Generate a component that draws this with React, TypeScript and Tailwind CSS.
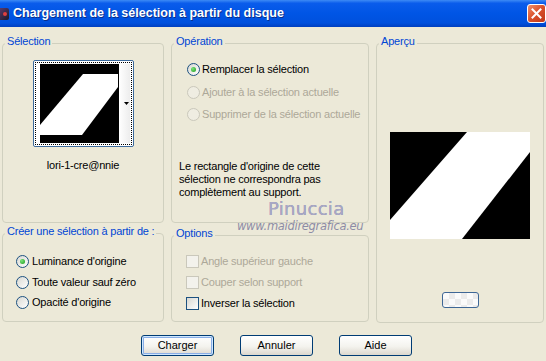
import React from "react";

const FONT = "font-['Liberation_Sans',Arial,sans-serif]";

function Group({
  label,
  className,
  children,
}: {
  label: string;
  className: string;
  children?: React.ReactNode;
}) {
  return (
    <div className={`relative border border-[#D0D0BF] rounded-[4px] ${className}`}>
      <span className="absolute -top-[9px] left-[2px] bg-[#ECE9D8] px-[2px] text-[11px] leading-[13px] text-[#0046D5] tracking-[-0.2px] whitespace-nowrap">
        {label}
      </span>
      {children}
    </div>
  );
}

function Radio({
  checked,
  disabled,
  label,
  gap,
  h,
}: {
  checked?: boolean;
  disabled?: boolean;
  label: string;
  gap: string;
  h: string;
}) {
  return (
    <div className={`flex items-center ${h}`}>
      <span
        className={`w-[13px] h-[13px] shrink-0 rounded-full border flex items-center justify-center ${
          disabled
            ? "border-[#CAC8BB] bg-[#EFEDE2]"
            : "border-[#1C5180] bg-[linear-gradient(135deg,#D8D8D2,#FFFFFF)]"
        }`}
      >
        {checked && (
          <span className="w-[5px] h-[5px] rounded-full bg-[radial-gradient(circle_at_35%_35%,#7BE47B,#1A9A1A)]" />
        )}
      </span>
      <span
        className={`${gap} text-[11px] leading-[13px] tracking-[-0.2px] whitespace-nowrap ${
          disabled ? "text-[#ACA899]" : "text-black"
        }`}
      >
        {label}
      </span>
    </div>
  );
}

function Check({ disabled, label }: { disabled?: boolean; label: string }) {
  return (
    <div className="flex items-center h-[21px]">
      <span
        className={`w-[13px] h-[13px] shrink-0 border ${
          disabled
            ? "border-[#CAC8BB] bg-[#F3F2EC]"
            : "border-[#1C5180] bg-[linear-gradient(135deg,#D8D8D2,#FFFFFF)]"
        }`}
      />
      <span
        className={`ml-[2px] text-[11px] leading-[13px] tracking-[-0.2px] whitespace-nowrap ${
          disabled ? "text-[#ACA899]" : "text-black"
        }`}
      >
        {label}
      </span>
    </div>
  );
}

function Btn({ children, def }: { children: React.ReactNode; def?: boolean }) {
  return (
    <div
      className={`w-[73px] h-[21px] rounded-[3px] border border-[#003C74] bg-[linear-gradient(to_bottom,#FFFFFF,#F4F3EE_55%,#DCD8CE)] flex items-center justify-center text-[11px] leading-[13px] text-black ${
        def ? "shadow-[inset_0_0_0_1px_#CEE7FF,inset_0_0_0_2px_#8AAEE6]" : ""
      }`}
    >
      {children}
    </div>
  );
}

export default function App() {
  return (
    <div className={`${FONT} w-[546px] h-[361px] bg-[#ECE9D8] flex flex-col overflow-hidden relative`}>
      {/* Title bar */}
      <div className="h-[27px] shrink-0 flex items-center bg-[linear-gradient(to_bottom,#3D8BF5_0%,#0A5CEB_12%,#0055E5_50%,#0050DD_85%,#003FBF_100%)]">
        <div className="w-[9px] h-[12px] mt-[1px] rounded-r-[2px] bg-[linear-gradient(135deg,#5A3A6A,#1A1A2A)] flex items-center justify-center">
          <span className="w-[4px] h-[4px] rounded-full bg-[#E04040]" />
        </div>
        <span className="ml-[4px] text-white font-bold text-[12.5px] leading-[15px] [text-shadow:1px_1px_0_#0A2E8A] whitespace-nowrap">
          Chargement de la sélection à partir du disque
        </span>
        <div className="ml-auto mr-0 w-[19px] h-[19px] rounded-[3px] border border-white bg-[linear-gradient(135deg,#F0906A,#D9502A_50%,#C0381A)] flex items-center justify-center">
          <svg width="11" height="11" viewBox="0 0 11 11">
            <path d="M1.5 1.5 L9.5 9.5 M9.5 1.5 L1.5 9.5" stroke="white" strokeWidth="2" strokeLinecap="square" />
          </svg>
        </div>
      </div>

      {/* Body */}
      <div className="flex pl-[2px] pt-[16px] gap-[7px]">
        {/* Column 1 */}
        <div className="flex flex-col gap-[10px] w-[162px]">
          <Group label="Sélection" className="h-[180px] flex flex-col items-center pt-[16px]">
            <div className="w-[101px] h-[87px] border border-[#3C6A9C] rounded-[2px] bg-white p-[1px]">
              <div className="w-full h-full border border-dotted border-black flex pl-[4px] pt-[1px] bg-white">
                <svg width="79" height="79" viewBox="0 0 79 79" className="shrink-0">
                  <rect width="79" height="79" fill="black" />
                  <polygon points="43,10 78,10 78,23 42,71 0,71 0,61" fill="white" />
                </svg>
                <div className="w-[11px] h-[79px] bg-[linear-gradient(to_right,#FFFFFF,#EDEDED)] flex items-center justify-end pr-[1px]">
                  <svg width="5" height="3" viewBox="0 0 5 3">
                    <polygon points="0,0 5,0 2.5,3" fill="black" />
                  </svg>
                </div>
              </div>
            </div>
            <div className="mt-[12px] text-[11px] leading-[13px] tracking-[-0.2px] text-black">lori-1-cre@nnie</div>
          </Group>
          <Group label="Créer une sélection à partir de :" className="h-[89px] pt-[17px] pl-[13px]">
            <Radio checked label="Luminance d'origine" gap="ml-[3px]" h="h-[21px]" />
            <Radio label="Toute valeur sauf zéro" gap="ml-[3px]" h="h-[20px]" />
            <Radio label="Opacité d'origine" gap="ml-[3px]" h="h-[21px]" />
          </Group>
        </div>

        {/* Column 2 */}
        <div className="flex flex-col gap-[12px] w-[198px]">
          <Group label="Opération" className="h-[180px] pt-[14px]">
            <div className="pl-[15px]">
              <Radio checked label="Remplacer la sélection" gap="ml-[2px]" h="h-[23px]" />
              <Radio disabled label="Ajouter à la sélection actuelle" gap="ml-[2px]" h="h-[22px]" />
              <Radio disabled label="Supprimer de la sélection actuelle" gap="ml-[2px]" h="h-[23px]" />
            </div>
            <p className="mt-[34px] pl-[7px] text-[11px] leading-[13px] tracking-[-0.2px] text-black">
              Le rectangle d'origine de cette
              <br />
              sélection ne correspondra pas
              <br />
              complètement au support.
            </p>
          </Group>
          <Group label="Options" className="h-[87px] pt-[15px] pl-[14px]">
            <Check disabled label="Angle supérieur gauche" />
            <Check disabled label="Couper selon support" />
            <Check label="Inverser la sélection" />
          </Group>
        </div>

        {/* Column 3 */}
        <Group label="Aperçu" className="w-[168px] h-[280px] flex flex-col items-center">
          <svg width="140" height="107" viewBox="0 0 140 107" className="mt-[88px] shrink-0">
            <rect width="140" height="107" fill="black" />
            <polygon points="77,0 140,0 140,20 72,107 0,107 0,88" fill="white" />
          </svg>
          <div className="mt-[53px] w-[37px] h-[16px] rounded-[3px] border border-[#3E6796] bg-[conic-gradient(#EBEBEB_25%,#FAFAFA_0_50%,#EBEBEB_0_75%,#FAFAFA_0)] bg-[length:12px_12px]" />
        </Group>
      </div>

      {/* Buttons */}
      <div className="flex pl-[141px] gap-[26px] mt-[12px]">
        <Btn def>Charger</Btn>
        <Btn>Annuler</Btn>
        <Btn>Aide</Btn>
      </div>

      {/* Watermark */}
      <div className="absolute left-[268px] top-[198px] text-[18px] leading-[21px] tracking-[0.3px] text-[#A8A8C6] [text-shadow:0_0_0.5px_#8080A4] font-['DejaVu_Sans',sans-serif] pointer-events-none">
        Pinuccia
      </div>
      <div className="absolute left-[237px] top-[220px] text-[11.5px] leading-[13px] italic text-[#8C8CA6] font-['DejaVu_Sans',sans-serif] tracking-[-0.3px] pointer-events-none">
        www.maidiregrafica.eu
      </div>
    </div>
  );
}
